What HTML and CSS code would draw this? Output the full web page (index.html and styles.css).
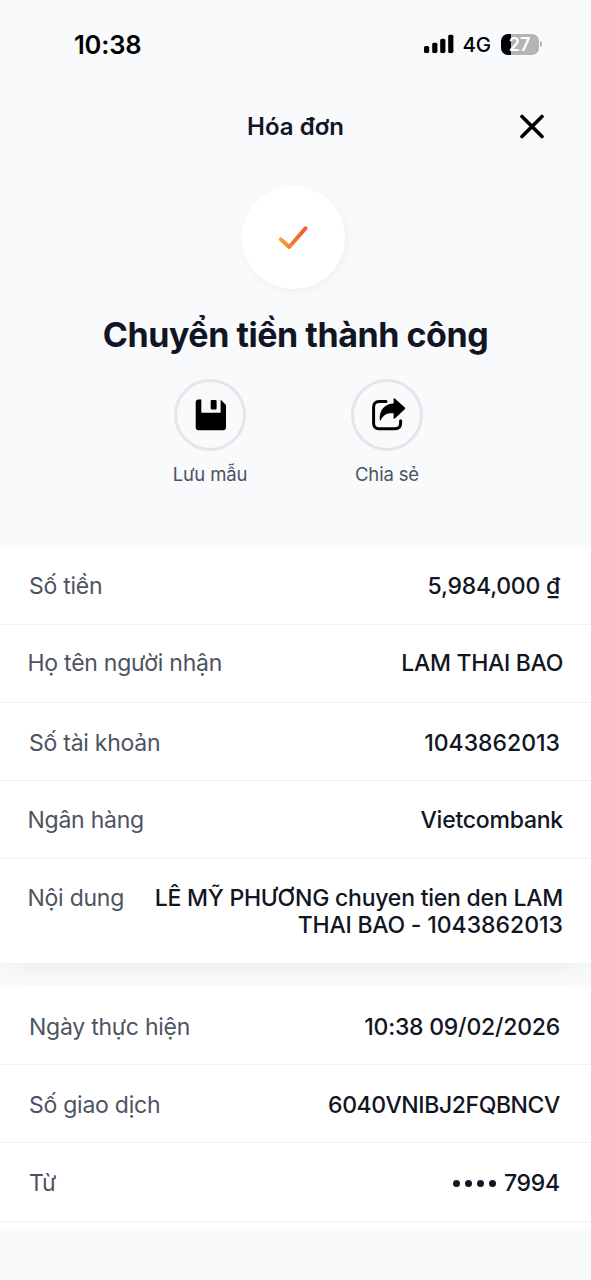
FILE: index.html
```html
<!DOCTYPE html>
<html lang="vi">
<head>
<meta charset="utf-8">
<title>Hóa đơn</title>
<link rel="stylesheet" href="styles.css">
</head>
<body>
<div class="status">
  <span class="clock">10:38</span>
  <div class="indicators">
    <svg class="signal" width="30" height="20" viewBox="0 0 30 20"><rect x="0" y="12" width="5.2" height="7" rx="1.5"/><rect x="8.2" y="8.7" width="5.2" height="10.3" rx="1.5"/><rect x="16.2" y="4.7" width="5.2" height="14.3" rx="1.5"/><rect x="24.2" y="0.7" width="5.2" height="18.3" rx="1.5"/></svg>
    <span class="network">4G</span>
    <div class="battery"><span class="battery-text">27</span></div>
    <span class="battery-tip"></span>
  </div>
</div>
<header class="header">
  <span class="header-title">Hóa đơn</span>
  <svg class="close" width="26" height="26" viewBox="0 0 26 26"><path d="M3 2.5L23 22.5M23 2.5L3 22.5"/></svg>
</header>
<section class="hero">
  <div class="badge">
    <svg width="36" height="30" viewBox="0 0 36 30"><defs><linearGradient id="orange" x1="0" x2="1" y1="0" y2="0"><stop offset="0" stop-color="#f7a02c"/><stop offset=".6" stop-color="#f36f2e"/><stop offset="1" stop-color="#f1592a"/></linearGradient></defs><path d="M4.8 16.4L13.1 24L29.6 5.2" fill="none" stroke="url(#orange)" stroke-width="3.9" stroke-linecap="round" stroke-linejoin="round"/></svg>
  </div>
  <h1 class="title">Chuyển tiền thành công</h1>
  <div class="actions">
    <div class="action">
      <div class="ring"><svg width="40" height="40" viewBox="0 0 40 40"><path d="M8.6 4.4H11.3V17.8H30.6V4.6L36 10V32.2Q36 35.2 33 35.2H8.7Q5.7 35.2 5.7 32.2V7.4Q5.7 4.4 8.6 4.4Z"/><rect x="20.7" y="5" width="5.9" height="9.6" rx="1"/></svg></div>
      <span class="action-label">Lưu mẫu</span>
    </div>
    <div class="action">
      <div class="ring"><svg width="40" height="40" viewBox="0 0 40 40"><path d="M19 6.6H12Q6.6 6.6 6.6 12V28.3Q6.6 33.7 12 33.7H28.2Q33.6 33.7 33.6 28.3V25.8" fill="none" stroke="#000" stroke-width="3" stroke-linecap="round"/><path d="M26.6 4Q26.6 2.6 27.8 3.6L37.8 12.4Q38.7 13.3 37.8 14.2L27.8 23.5Q26.6 24.4 26.6 22.9V18.3C20.5 17.8 16.5 19.5 13.9 25Q13.2 26 12.8 25C12 15 18 8.8 26.6 8.6Z"/></svg></div>
      <span class="action-label">Chia sẻ</span>
    </div>
  </div>
</section>
<section class="card raised">
  <div class="row"><span class="label">Số tiền</span><span class="value">5,984,000 ₫</span></div>
  <div class="row wide"><span class="label">Họ tên người nhận</span><span class="value name">LAM THAI BAO</span></div>
  <div class="row"><span class="label">Số tài khoản</span><span class="value digits">1043862013</span></div>
  <div class="row wide"><span class="label">Ngân hàng</span><span class="value">Vietcombank</span></div>
  <div class="row wide note"><span class="label">Nội dung</span><span class="value">LÊ MỸ PHƯƠNG chuyen tien den LAM<br>THAI BAO - <span class="digits">1043862013</span></span></div>
</section>
<section class="card details">
  <div class="row"><span class="label">Ngày thực hiện</span><span class="value">10:38 09/02/2026</span></div>
  <div class="row"><span class="label">Số giao dịch</span><span class="value code">6040VNIBJ2FQBNCV</span></div>
  <div class="row"><span class="label">Từ</span><span class="value masked"><span class="dots"><i></i><i></i><i></i><i></i></span>7994</span></div>
</section>
</body>
</html>
```
FILE: styles.css
```css
* { box-sizing: border-box; }
body {
  margin: 0;
  width: 591px;
  height: 1280px;
  overflow: hidden;
  background: #f9fafc;
  color: #111624;
  font-family: Inter, "Liberation Sans", sans-serif;
}
svg { display: block; flex: none; }
.status {
  display: flex;
  justify-content: space-between;
  align-items: center;
  height: 88px;
  padding: 0 49.5px 0 74px;
  color: #000;
}
.clock { padding-top: 1px; font-size: 25.5px; font-weight: 600; line-height: 30px; letter-spacing: -.2px; }
.indicators { display: flex; align-items: center; }
.signal { margin-right: 8.5px; }
.network { padding-top: 1px; font-size: 20.5px; font-weight: 500; line-height: 24px; letter-spacing: -.2px; }
.battery {
  width: 38px;
  height: 21px;
  margin-left: 9.5px;
  border-radius: 7px;
  background: linear-gradient(90deg, #000 0 10.5px, #b3b4b6 10.5px);
  color: #fff;
  font-size: 18px;
  font-weight: 600;
  line-height: 21px;
  text-align: center;
}
.battery-tip { width: 2px; height: 6px; margin-left: 1px; border-radius: 0 2px 2px 0; background: #b3b4b6; }
.header {
  display: grid;
  grid-template-columns: 1fr auto 1fr;
  align-items: center;
  height: 78px;
}
.header-title { grid-column: 2; font-size: 24px; font-weight: 600; line-height: 30px; }
.close { justify-self: end; margin-right: 46px; fill: none; stroke: #000; stroke-width: 3.6; stroke-linecap: round; }
.hero { display: flex; flex-direction: column; align-items: center; height: 380.5px; padding-top: 20px; }
.badge {
  display: grid;
  place-items: center;
  width: 103px;
  height: 103px;
  margin-right: 4px;
  border-radius: 50%;
  background: #fff;
  box-shadow: 2px 3px 8px rgba(17, 24, 39, .045);
}
.title { margin: 26px 0 0; font-size: 34px; font-weight: 700; line-height: 40px; letter-spacing: -.45px; white-space: nowrap; }
.actions { display: grid; grid-template-columns: 177px 177px; margin-top: 24px; margin-left: 6px; }
.action { display: flex; flex-direction: column; align-items: center; gap: 11px; }
.ring {
  display: grid;
  place-items: center;
  width: 72px;
  height: 72px;
  border: 3px solid #e5e6ea;
  border-radius: 50%;
}
.action-label { color: #4b5260; font-size: 18.5px; line-height: 24px; letter-spacing: -.15px; }
.card { background: #fff; }
.raised { height: 416.5px; box-shadow: 0 10px 26px -8px rgba(17, 24, 39, .07); }
.row {
  display: flex;
  justify-content: space-between;
  align-items: flex-start;
  height: 78.2px;
  padding: 26.8px 31px 0 29px;
  border-bottom: 1.5px solid #f0f1f3;
  font-size: 23px;
  line-height: 27px;
}
.wide { padding: 25.8px 28px 0 27.5px; }
.note { border-bottom: 0; height: 104px; }
.label { color: #4d5361; letter-spacing: -.25px; }
.value { font-weight: 500; letter-spacing: -.23px; text-align: right; white-space: nowrap; }
.digits { letter-spacing: 0; }
.name { letter-spacing: -.32px; }
.code { letter-spacing: -.4px; }
.details { height: 242px; margin-top: 23.5px; padding-top: .5px; position: relative; }
.masked { display: flex; }
.dots { display: flex; align-items: center; gap: 5px; margin-right: 8px; }
.dots i { width: 7px; height: 7px; border-radius: 50%; background: #111624; }
```
